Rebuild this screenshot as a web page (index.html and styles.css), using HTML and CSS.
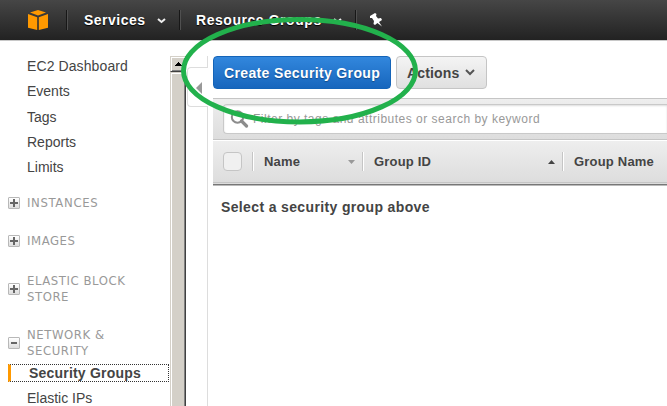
FILE: index.html
```html
<!DOCTYPE html>
<html lang="en">
<head>
<meta charset="utf-8">
<title>EC2 Security Groups</title>
<link rel="stylesheet" href="styles.css">
</head>
<body>
<header class="topbar">
  <svg class="logo" width="20" height="20" viewBox="0 0 20 20"><path fill="#f90" d="M10 0l8 2.500-8 3-8-3zM0 4l9.200 3.200V20L0 17.800zM20 4l-9.200 3.200V20L20 17.800z"/></svg>
  <div class="menu services"><span class="t-services">Services</span><svg class="chev" width="9" height="6" viewBox="0 0 9 6"><path d="M1 1l3.5 3L8 1" fill="none" stroke="#eee" stroke-width="2"/></svg></div>
  <div class="menu resources"><span class="t-resources">Resource Groups</span><svg class="chev" width="9" height="6" viewBox="0 0 9 6"><path d="M1 1l3.5 3L8 1" fill="none" stroke="#eee" stroke-width="2"/></svg></div>
  <div class="menu pin"><svg width="12" height="14" viewBox="0 0 12 14"><path fill="#fff" d="M0 3L5 0l1.500 1-.5 2 2 2.500L11 5l1 2-3 2 3 4.500L7.400 10 5 12l-1.500-1 .5-3-2-3L0 5z"/></svg></div>
</header>
<div class="page">
  <nav class="sidebar">
    <a class="link wide">EC2 Dashboard</a>
    <a class="link">Events</a>
    <a class="link">Tags</a>
    <a class="link">Reports</a>
    <a class="link">Limits</a>
    <div class="group g1"><i class="toggle plus"></i><span>INSTANCES</span></div>
    <div class="group g2"><i class="toggle plus"></i><span>IMAGES</span></div>
    <div class="group g3"><i class="toggle plus"></i><span>ELASTIC BLOCK<br>STORE</span></div>
    <div class="group g4"><i class="toggle"></i><span>NETWORK &amp;<br>SECURITY</span></div>
    <a class="selected"><span>Security Groups</span></a>
    <a class="link last">Elastic IPs</a>
  </nav>
  <div class="scrollbar"><div class="up"><svg width="7" height="4" viewBox="0 0 7 4" shape-rendering="crispEdges"><path d="M3 0h1v1h1v1h1v1h1v1H0V3h1V2h1V1h1z"/></svg></div><div class="thumb"></div></div>
  <div class="gutter"><div class="gap"></div><div class="handle"><svg width="6" height="12" viewBox="0 0 6 12"><path fill="#999" d="M6 0v12L0 6z"/></svg></div><div class="rule"></div></div>
  <main class="main">
    <div class="actions">
      <div class="btn primary"><span>Create Security Group</span></div>
      <div class="btn plain"><span>Actions</span><svg width="10" height="7" viewBox="0 0 10 7"><path d="M1 1l4 4 4-4" fill="none" stroke="#555" stroke-width="2"/></svg></div>
    </div>
    <div class="filter"><div class="input"><svg width="19" height="18" viewBox="0 0 19 18"><g fill="none" stroke="#8c8c8c"><circle cx="7.500" cy="7" r="5.700" stroke-width="2"/><path d="M11.500 11l5 5" stroke-width="3.200" stroke-linecap="round"/></g></svg><span>Filter by tags and attributes or search by keyword</span></div></div>
    <div class="thead">
      <div class="check"><i></i></div>
      <div class="col name"><span>Name</span><svg width="7" height="4" viewBox="0 0 7 4"><path fill="#999" d="M0 0h7L3.500 4z"/></svg></div>
      <div class="col gid"><span>Group ID</span><svg width="7" height="4" viewBox="0 0 7 4"><path fill="#444" d="M0 4h7L3.500 0z"/></svg></div>
      <div class="col gname"><span>Group Name</span></div>
    </div>
    <div class="split"></div>
    <p class="empty"><span>Select a security group above</span></p>
  </main>
</div>
<svg class="mark" width="667" height="406" viewBox="0 0 667 406"><ellipse cx="299.500" cy="70.700" rx="116" ry="51.200" fill="none" stroke="#22b14c" stroke-width="5"/></svg>
</body>
</html>
```
FILE: styles.css
```css
* { box-sizing: border-box; }
body { margin: 0; width: 667px; height: 406px; overflow: hidden; background: #fff; color: #444; font: 14px/18px "Liberation Sans", Arial, sans-serif; }
svg { display: block; flex: none; }
span { white-space: nowrap; }
.topbar { height: 41px; display: flex; align-items: center; background: linear-gradient(#464646, #222); border-bottom: 1px solid #c8c8c8; color: #fff; font-weight: bold; }
.logo { margin: 0 18px 0 28px; }
.menu { height: 20px; display: flex; align-items: center; border-left: 1px solid #171717; box-shadow: inset 1px 0 #505050; text-shadow: 0 1px 1px #000; }
.services { width: 113px; padding-left: 17px; }
.resources { width: 176px; padding-left: 16px; }
.t-services { letter-spacing: .5px; }
.t-resources { letter-spacing: .55px; }
.chev { margin: 2px 0 0 11px; }
.pin { padding-left: 14px; }
.page { display: flex; height: 365px; }
.sidebar { width: 170px; padding-top: 13px; flex: none; }
.link { display: block; height: 25.300px; line-height: 25px; padding-left: 27px; }
.wide { letter-spacing: .1px; }
.group { display: flex; align-items: center; padding-left: 8px; gap: 7px; color: #999; font: 13px/16px "DejaVu Sans Condensed", "DejaVu Sans", sans-serif; font-stretch: condensed; letter-spacing: .55px; }
.g1 { margin-top: 14.500px; letter-spacing: .65px; }
.g2 { margin-top: 22px; }
.g3 { margin-top: 24px; }
.g4 { margin-top: 22px; }
.toggle { width: 12px; height: 12px; flex: none; border: 1px solid #b8b8b8; border-radius: 1px; background: linear-gradient(#666, #666) center / 6px 2px no-repeat, linear-gradient(#fff, #ddd); }
.plus { background: linear-gradient(#666, #666) center / 8px 2px no-repeat, linear-gradient(#666, #666) center / 2px 8px no-repeat, linear-gradient(#fff, #ddd); }
.selected { display: flex; align-items: center; height: 18px; margin: 5px 1px 0 8px; padding-left: 18px; border: 1px dotted #333; border-left: 3px solid #f90; font-weight: bold; letter-spacing: .2px; }
.last { margin-top: 4px; }
.scrollbar { width: 16px; margin-top: 15px; flex: none; display: flex; flex-direction: column; background: #d4d0c8; }
.up { height: 16px; display: flex; align-items: center; justify-content: center; border: 1px solid #d4d0c8; border-right-color: #404040; border-bottom-color: #404040; box-shadow: inset 1px 1px #fff, inset -1px -1px #808080; }
.thumb { flex: 1; border-left: 1px solid #d4d0c8; border-right: 1px solid #404040; border-top: 1px solid #d4d0c8; box-shadow: inset 1px 1px #fff, inset -1px 0 #808080; }
.gutter { width: 22px; flex: none; margin-top: 15px; display: flex; flex-direction: column; }
.gap { height: 11px; border-right: 1px solid #ddd; }
.handle { height: 40px; margin-left: 1px; padding: 14px 0 0 8px; border: 1px solid #ddd; border-right: 0; border-radius: 4px 0 0 4px; }
.rule { flex: 1; border-right: 1px solid #ddd; }
.main { flex: 1; min-width: 0; padding: 15px 0 0 5px; }
.actions { display: flex; gap: 5px; height: 42px; }
.btn { height: 33px; display: flex; align-items: center; border-radius: 4px; font-weight: bold; }
.primary { width: 178px; padding-left: 10px; color: #fff; background: linear-gradient(#3287dd, #1766bd); border: 1px solid #1464b8; text-shadow: 0 1px 1px #124a87; letter-spacing: .36px; }
.plain { width: 91px; padding-left: 10px; gap: 6px; background: linear-gradient(#f4f4f4, #e0e0e0); border: 1px solid #c5c5c5; letter-spacing: .15px; }
.filter { height: 42px; padding: 5px 0 5px 10px; background: linear-gradient(#eee, #ddd); border-top: 1px solid #c5c5c5; border-bottom: 1px solid #c5c5c5; }
.input { height: 30px; display: flex; align-items: center; padding-left: 6px; gap: 4px; background: #fff; border: 1px solid #c9c9c9; border-right: 0; border-radius: 4px 0 0 4px; color: #999; font-size: 12px; letter-spacing: .5px; box-shadow: inset 0 1px 2px #ddd; }
.thead { height: 43px; display: flex; align-items: center; background: linear-gradient(#eee, #ddd); border-top: 1px solid #fff; border-bottom: 1px solid #c5c5c5; font-size: 13px; font-weight: bold; letter-spacing: .2px; }
.check { width: 39px; padding-left: 10px; }
.check i { display: block; width: 19px; height: 19px; border: 1px solid #c5c5c5; border-radius: 4px; background: #f0f0f0; }
.col { height: 19px; display: flex; align-items: center; justify-content: space-between; border-left: 1px solid #c5c5c5; box-shadow: inset 1px 0 #fff; padding: 0 7px 0 11px; }
.name { width: 110px; }
.gid { width: 200px; }
.gname { flex: 1; }
.split { height: 3px; border-top: 1px solid #ddd; border-bottom: 1px solid #bbb; background: #777; }
.empty { margin: 12px 0 0 8px; font-weight: bold; letter-spacing: .36px; }
.mark { position: absolute; left: 0; top: 0; }
```
